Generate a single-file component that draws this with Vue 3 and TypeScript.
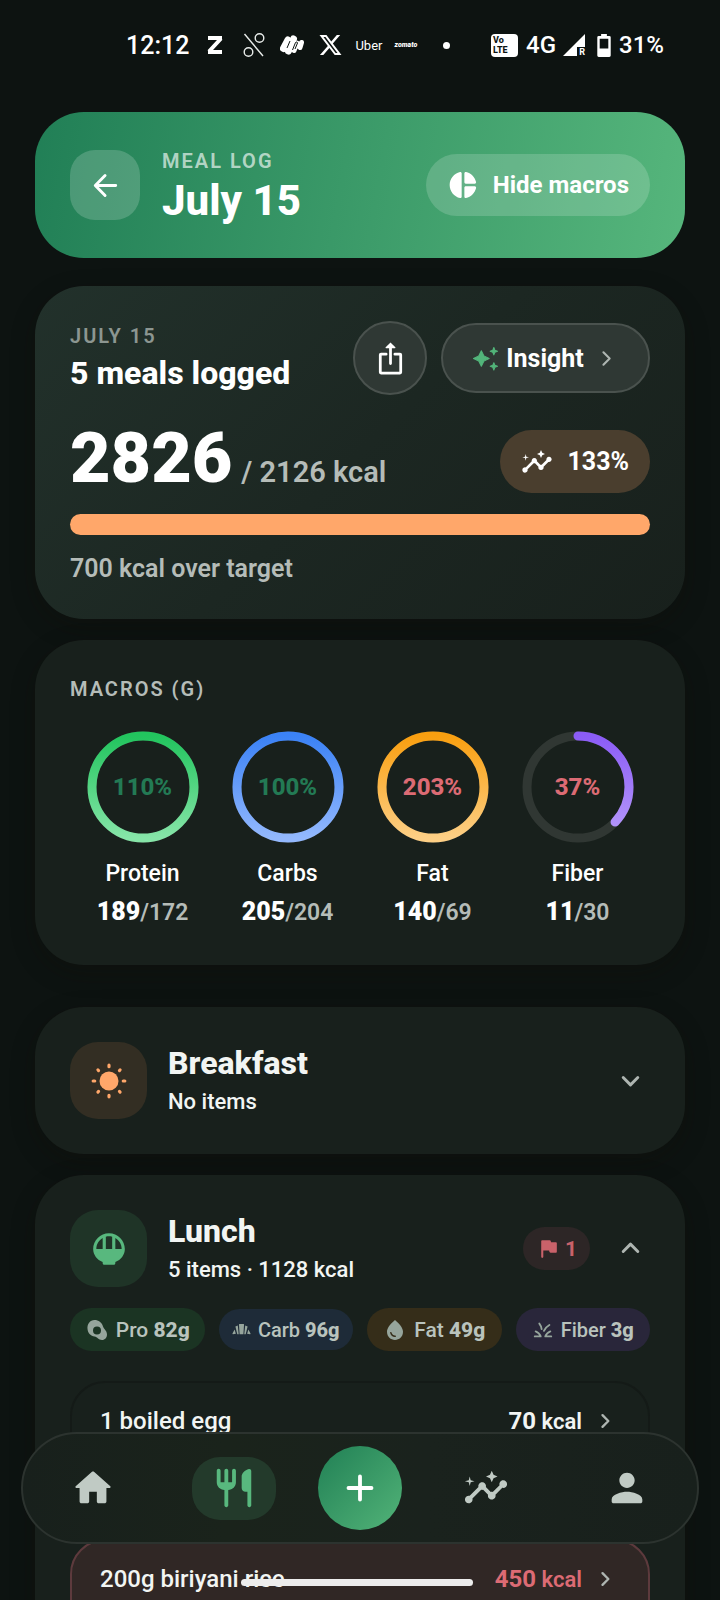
<script setup lang="ts">
interface Macro {
  name: string
  percent: number
  value: number
  goal: number
  from: string
  to: string
  tone: 'ok' | 'off'
}

interface Chip {
  key: string
  label: string
  grams: string
}

interface FoodItem {
  name: string
  kcal: number
  flagged: boolean
}

const radius = 51
const circumference = 2 * Math.PI * radius

const macros: Macro[] = [
  { name: 'Protein', percent: 110, value: 189, goal: 172, from: '#22c55e', to: '#86e5a8', tone: 'ok' },
  { name: 'Carbs', percent: 100, value: 205, goal: 204, from: '#3b82f6', to: '#93b8fd', tone: 'ok' },
  { name: 'Fat', percent: 203, value: 140, goal: 69, from: '#f99f10', to: '#fdcf85', tone: 'off' },
  { name: 'Fiber', percent: 37, value: 11, goal: 30, from: '#8b5cf6', to: '#b79bfb', tone: 'off' },
]

const chips: Chip[] = [
  { key: 'pro', label: 'Pro', grams: '82g' },
  { key: 'carb', label: 'Carb', grams: '96g' },
  { key: 'fat', label: 'Fat', grams: '49g' },
  { key: 'fiber', label: 'Fiber', grams: '3g' },
]

const items: FoodItem[] = [
  { name: '1 boiled egg', kcal: 70, flagged: false },
  { name: '200g biriyani rice', kcal: 450, flagged: true },
]

const insightsPath =
  'M21 8c-1.45 0-2.26 1.44-1.93 2.51l-3.55 3.56c-.3-.09-.74-.09-1.04 0l-2.55-2.55C12.27 10.45 11.46 9 10 9c-1.45 0-2.27 1.44-1.93 2.52l-4.56 4.55C2.44 15.74 1 16.55 1 18c0 1.1.9 2 2 2 1.45 0 2.26-1.44 1.93-2.51l4.55-4.56c.3.09.74.09 1.04 0l2.55 2.55C12.73 16.55 13.54 18 15 18c1.45 0 2.27-1.44 1.93-2.52l3.56-3.55C21.56 12.26 23 11.45 23 10c0-1.1-.9-2-2-2zM15 9l.94-2.07L18 6l-2.06-.93L15 3l-.92 2.07L12 6l2.08.93zM3.5 11L4 9l2-.5L4 8l-.5-2L3 8l-2 .5L3 9z'

function dash(percent: number): string {
  const length = (Math.min(percent, 100) / 100) * circumference
  return `${length} ${circumference}`
}
</script>

<template>
  <div class="screen">
    <div class="status">
      <div class="status-left">
        <span class="clock">12:12</span>
        <svg class="s-z" viewBox="0 0 16 18"><path d="M1 2h14M14 2.5 2 15.5M1 16h14" fill="none" stroke="#fff" stroke-width="4" /></svg>
        <svg class="s-pct" viewBox="0 0 22 24" fill="none" stroke="#e8ecea" stroke-width="1.4">
          <path d="M1.500 1 20 23" /><circle cx="16.500" cy="5" r="4.300" /><circle cx="5.500" cy="19" r="4.300" />
        </svg>
        <svg class="s-news" viewBox="0 0 24 20">
          <g stroke="#fff" stroke-linecap="round" fill="none">
            <path d="M3.500 13.500 8 5" stroke-width="7" />
            <path d="M8.500 16 13.500 4" stroke-width="7" />
            <path d="M14 15.500 17 8M20 12.500 21.500 7.500" stroke-width="5" />
          </g>
          <path d="M7 13l3-7M12.500 15l3-7.500q1.500-1.500 2 .5l-2.500 6" fill="none" stroke="#0d1311" stroke-width="1" />
        </svg>
        <svg class="s-x" viewBox="0 0 24 24">
          <path d="M18.900 1.150h3.680l-8.040 9.190L24 22.850h-7.410l-5.800-7.590-6.640 7.590H.47l8.600-9.830L0 1.150h7.590l5.240 6.930zM17.610 20.640h2.040L6.490 3.240H4.300z" fill="#fff" fill-rule="evenodd" />
        </svg>
        <span class="uber">Uber</span>
        <span class="zomato">zomato</span>
        <span class="dot"></span>
      </div>
      <div class="status-right">
        <span class="volte"><span>Vo</span><span>LTE</span></span>
        <span class="net">4G</span>
        <span class="signal">
          <svg viewBox="0 0 22 22"><path d="M22 0v13h-8v9H0z" fill="#fff" /></svg>
          <span class="roam">R</span>
        </span>
        <svg class="battery" viewBox="0 0 14 24">
          <path d="M4 0h6v2h2.500q1.500 0 1.500 1.500v19q0 1.500-1.500 1.500h-11Q0 24 0 22.500v-19Q0 2 1.500 2H4zM2.500 5v10h9V5z" fill="#fff" fill-rule="evenodd" />
        </svg>
        <span class="net">31%</span>
      </div>
    </div>

    <main class="content">
      <header class="hero">
        <button class="back" aria-label="Back">
          <svg class="i35" viewBox="0 0 24 24" fill="none" stroke="#fff" stroke-width="2" stroke-linecap="round" stroke-linejoin="round"><path d="M19 12H5.500M11.700 5.200 5 12l6.700 6.800" /></svg>
        </button>
        <div class="hero-text">
          <span class="eyebrow">MEAL LOG</span>
          <h1>July 15</h1>
        </div>
        <button class="hide">
          <svg class="i32" viewBox="0 0 24 24" fill="#fff"><path d="M11 3.180v17.640c0 .64-.59 1.120-1.210.98C5.320 20.800 2 16.790 2 12s3.320-8.800 7.790-9.800c.62-.14 1.210.34 1.210.98zm2.030 0v6.810c0 .55.45 1 1 1h6.790c.64 0 1.120-.59.98-1.220-.85-3.760-3.800-6.720-7.550-7.570-.63-.14-1.220.34-1.220.98zm0 10.830v6.810c0 .64.59 1.120 1.220.98 3.760-.85 6.710-3.820 7.560-7.580.14-.62-.35-1.220-.98-1.220h-6.790c-.56.01-1.010.46-1.010 1.010z" /></svg>
          Hide macros
        </button>
      </header>

      <section class="card summary">
        <div class="row">
          <div class="grow">
            <p class="eyebrow">JULY 15</p>
            <h2>5 meals logged</h2>
          </div>
          <button class="share" aria-label="Share">
            <svg class="i35" viewBox="0 0 24 24"><path d="M9 9H5.500Q5 9 5 9.500v12q0 .5.5.5h13q.5 0 .5-.5v-12q0-.5-.5-.5H15M12 4v11.500" fill="none" stroke="#fff" stroke-width="1.900" stroke-linecap="round" stroke-linejoin="round" /><path d="M12 1 8.700 4.200q-.5.800.4.800h5.800q.9 0 .4-.8z" fill="#fff" /></svg>
          </button>
          <button class="insight">
            <svg class="i25" viewBox="0 0 24 24" fill="#52b57a"><path d="M20 1.500l1 2.500 2.500 1-2.500 1-1 2.500-1-2.500-2.500-1 2.500-1zM8 4.500l2.500 5 5 2.500-5 2.500-2.500 5-2.500-5-5-2.500 5-2.500zM20 16l1 2.500 2.500 1-2.500 1-1 2.500-1-2.500-2.500-1 2.500-1z" stroke="#52b57a" stroke-width="1" stroke-linejoin="round" /></svg>
            <span>Insight</span>
            <svg class="i25 chev" viewBox="0 0 24 24"><path d="m10 6 6 6-6 6" /></svg>
          </button>
        </div>
        <div class="row total">
          <p class="grow"><strong>2826</strong><span>/ 2126 kcal</span></p>
          <div class="ratio">
            <svg class="i32" viewBox="0 0 24 24" fill="#fff"><path :d="insightsPath" /></svg>
            133%
          </div>
        </div>
        <div class="bar" role="progressbar" aria-label="Calories" aria-valuenow="100" aria-valuemin="0" aria-valuemax="100"></div>
        <p class="over">700 kcal over target</p>
      </section>

      <section class="card macros">
        <p class="eyebrow light">MACROS (G)</p>
        <div class="rings">
          <div v-for="m in macros" :key="m.name" class="macro">
            <div class="ring">
              <svg viewBox="0 0 112 112">
                <defs>
                  <linearGradient :id="'ring-' + m.name" x1="1" y1="0" x2="0" y2="0">
                    <stop offset="0" :stop-color="m.from" /><stop offset="1" :stop-color="m.to" />
                  </linearGradient>
                </defs>
                <g transform="rotate(-90 56 56)" fill="none" stroke-width="9" stroke-linecap="round">
                  <circle cx="56" cy="56" :r="radius" stroke="#303733" />
                  <circle cx="56" cy="56" :r="radius" :stroke="`url(#ring-${m.name})`" :stroke-dasharray="dash(m.percent)" />
                </g>
              </svg>
              <span :class="['pct', m.tone]">{{ m.percent }}%</span>
            </div>
            <span class="m-name">{{ m.name }}</span>
            <span class="m-val"><b>{{ m.value }}</b>/{{ m.goal }}</span>
          </div>
        </div>
      </section>

      <section class="card meal first">
        <div class="row">
          <span class="tile sun">
            <svg class="i38" viewBox="0 0 24 24"><circle cx="12" cy="12" r="6" fill="#ffa76a" /><path d="M12 2v1M12 21v1M2 12h1M21 12h1M5 5l.4.400M18.600 18.600l.4.400M19 5l-.4.400M5.400 18.600 5 19" fill="none" stroke="#ffa76a" stroke-width="2" stroke-linecap="round" /></svg>
          </span>
          <div class="grow">
            <h2>Breakfast</h2>
            <p class="sub">No items</p>
          </div>
          <button class="toggle" aria-label="Expand Breakfast">
            <svg class="i35 chev" viewBox="0 0 24 24"><path d="m7 10 5 5 5-5" /></svg>
          </button>
        </div>
      </section>

      <section class="card meal">
        <div class="row">
          <span class="tile bowl">
            <svg class="i38" viewBox="0 0 24 24" fill="#58b87e"><path d="M22 12c0-5.520-4.480-10-10-10S2 6.480 2 12c0 3.690 2.470 6.860 6 8.250V21q0 1 1 1h6q1 0 1-1v-.75c3.530-1.390 6-4.560 6-8.250zM20 12h-4V5.080c2.390 1.390 4 3.970 4 6.920zM14 4.260V12h-4V4.260C10.640 4.100 11.310 4 12 4s1.360.1 2 .26zM4 12c0-2.950 1.610-5.530 4-6.920V12z" fill-rule="evenodd" /></svg>
          </span>
          <div class="grow">
            <h2>Lunch</h2>
            <p class="sub">5 items · 1128 kcal</p>
          </div>
          <span class="flag">
            <svg class="i25" viewBox="0 0 24 24" fill="#c9626a"><path d="M14.400 6l-.24-1.200c-.09-.46-.5-.8-.98-.8H6c-.55 0-1 .45-1 1v15c0 .55.45 1 1 1s1-.45 1-1v-6h5.600l.24 1.200c.09.47.5.8.98.8H19c.55 0 1-.45 1-1V7c0-.55-.45-1-1-1h-4.600z" /></svg>
            1
          </span>
          <button class="toggle" aria-label="Collapse Lunch">
            <svg class="i35 chev" viewBox="0 0 24 24"><path d="m7 14 5-5 5 5" /></svg>
          </button>
        </div>

        <div class="chips">
          <span v-for="c in chips" :key="c.key" :class="['chip', c.key]">
            <svg viewBox="0 0 24 24" fill="currentColor">
              <path v-if="c.key === 'pro'" fill-rule="evenodd" d="M9.500 2C5 2 2 6 2.500 11c.4 4.500 3.500 7 7 7.500 3 .5 4 3.500 7.500 3.500 3 0 5-2.500 5-5.500 0-4-3-5-4-8C17 4.500 13.500 2 9.500 2zM12 8.400a4 4 0 1 0 0 8 4 4 0 0 0 0-8z" />
              <g v-else-if="c.key === 'carb'">
                <path d="M9.300 5h5.400q.6 0 .5.600l-.8 12.400H9.600L8.800 5.600q-.1-.6.500-.6zM4.300 8.200 7.300 7l1.200 11H6.700zM19.700 8.200 16.700 7l-1.200 11h1.800zM3.300 12 .6 16.900q-.2 1 .6 1l3.700-.4zM20.700 12l2.700 4.900q.2 1-.6 1l-3.700-.4z" />
              </g>
              <path v-else-if="c.key === 'fat'" fill-rule="evenodd" d="M12 2c-5.330 4.550-8 8.480-8 11.800 0 4.980 3.800 8.200 8 8.200s8-3.220 8-8.200c0-3.320-2.670-7.250-8-11.800zM7.830 14c.37 0 .67.26.74.62.41 2.220 2.280 2.980 3.640 2.870.43-.02.79.32.79.75 0 .4-.32.73-.72.75-2.130.13-4.620-1.090-5.190-4.120-.08-.45.28-.87.74-.87z" />
              <path v-else d="M3 19h6.500q-1.500-4-5.500-5.500M21 19h-6.500q1.500-4 5.500-5.500M13 13q1.500-4 6-6.500M10.500 11Q10 7.500 8 5" fill="none" stroke="currentColor" stroke-width="2" stroke-linecap="round" stroke-linejoin="round" />
            </svg>
            <span>{{ c.label }} <b>{{ c.grams }}</b></span>
          </span>
        </div>

        <ul class="items">
          <li v-for="f in items" :key="f.name">
            <a href="#" :class="['item', { flagged: f.flagged }]">
              <span class="grow">{{ f.name }}</span>
              <span class="kcal"><b>{{ f.kcal }}</b> kcal</span>
              <svg class="i28 chev" viewBox="0 0 24 24"><path d="m9 7 5 5-5 5" /></svg>
            </a>
          </li>
        </ul>
      </section>
    </main>

    <nav class="dock">
      <a href="#" aria-label="Home"><svg class="i46" viewBox="0 0 24 24"><path d="M10 19v-5h4v5c0 .55.45 1 1 1h3c.55 0 1-.45 1-1v-7h1.700c.46 0 .68-.57.33-.87L12.670 3.600c-.38-.34-.96-.34-1.340 0l-8.360 7.530c-.34.3-.13.87.33.87H5v7c0 .55.45 1 1 1h3c.55 0 1-.45 1-1z" /></svg></a>
      <a href="#" aria-label="Meals" class="active"><svg class="i46" viewBox="0 0 24 24"><path d="M16 6v6c0 1.100.9 2 2 2h1v7c0 .55.45 1 1 1s1-.45 1-1V3.130c0-.65-.61-1.130-1.240-.98C17.600 2.680 16 4.510 16 6zm-5 3H9V3c0-.55-.45-1-1-1s-1 .45-1 1v6H5V3c0-.55-.45-1-1-1s-1 .45-1 1v6c0 2.210 1.790 4 4 4v8c0 .55.45 1 1 1s1-.45 1-1v-8c2.210 0 4-1.790 4-4V3c0-.55-.45-1-1-1s-1 .45-1 1v6z" /></svg></a>
      <button class="add" aria-label="Add"><svg class="i46" viewBox="0 0 24 24"><path d="M12 6v12M6 12h12" fill="none" stroke="#fff" stroke-width="2" stroke-linecap="round" /></svg></button>
      <a href="#" aria-label="Trends"><svg class="i46" viewBox="0 0 24 24"><path :d="insightsPath" /></svg></a>
      <a href="#" aria-label="Profile"><svg class="i46" viewBox="0 0 24 24"><path d="M12 12c2.210 0 4-1.790 4-4s-1.790-4-4-4-4 1.790-4 4 1.790 4 4 4zm0 2c-2.670 0-8 1.340-8 4v1c0 .55.45 1 1 1h14c.55 0 1-.45 1-1v-1c0-2.660-5.330-4-8-4z" /></svg></a>
    </nav>
    <div class="gesture"></div>
  </div>
</template>

<style>
body {
  margin: 0;
  background: #0d1311;
}
</style>

<style scoped>
.screen {
  position: relative;
  height: 100vh;
  overflow: hidden;
  background: #0d1311;
  color: #fff;
  font-family: Roboto, "Noto Sans", sans-serif;
}
h1, h2, p, ul { margin: 0; padding: 0; }
button { border: 0; padding: 0; font: inherit; color: inherit; cursor: pointer; }
a { color: inherit; text-decoration: none; }
svg { display: block; flex: none; }
.i25 { width: 25px; height: 25px; }
.i28 { width: 28px; height: 28px; }
.i32 { width: 32px; height: 32px; }
.i35 { width: 35px; height: 35px; }
.i38 { width: 38px; height: 38px; }
.i46 { width: 46px; height: 46px; }
.chev { fill: none; stroke: #aeb5b1; stroke-width: 2; stroke-linecap: round; stroke-linejoin: round; }
.row { display: flex; align-items: center; }
.grow { flex: 1; min-width: 0; }

.status {
  display: flex;
  justify-content: space-between;
  align-items: center;
  height: 90px;
  padding: 0 56px 0 126px;
  font-weight: 500;
  font-size: 24px;
}
.status-left, .status-right { display: flex; align-items: center; }
.clock { font-size: 25px; }
.s-z { width: 16px; height: 18px; margin-left: 18px; }
.s-pct { width: 22px; height: 24px; margin-left: 20px; }
.s-news { width: 24px; height: 20px; margin-left: 15px; }
.s-x { width: 23px; height: 22px; margin-left: 15px; }
.uber { margin-left: 13px; font-size: 13px; font-weight: 400; }
.zomato { margin-left: 12px; font-size: 7px; font-weight: 900; font-style: italic; }
.dot { width: 7px; height: 7px; margin-left: 26px; border-radius: 50%; background: #fff; }
.volte {
  display: flex;
  flex-direction: column;
  justify-content: center;
  width: 25px;
  height: 23px;
  padding-left: 2px;
  border-radius: 4px;
  background: #fff;
  color: #0d1311;
  font-size: 9px;
  font-weight: 800;
  line-height: 10px;
}
.net { margin-left: 8px; }
.signal { position: relative; margin-left: 7px; }
.signal svg { width: 22px; height: 22px; }
.roam { position: absolute; right: 0; bottom: 0; font-size: 9px; line-height: 8px; font-weight: 700; }
.battery { width: 14px; height: 23px; margin-left: 12px; }

.content { padding: 22px 35px 0; }

.hero {
  display: flex;
  align-items: center;
  padding: 33px 35px;
  border-radius: 49px;
  background: linear-gradient(100deg, #217f56, #56b67c);
}
.back {
  display: grid;
  place-items: center;
  width: 70px;
  height: 70px;
  border-radius: 25px;
  background: rgba(255, 255, 255, 0.18);
}
.hero-text { flex: 1; margin-left: 22px; }
.hero-text .eyebrow { line-height: 32px; color: rgba(255, 255, 255, 0.65); }
.eyebrow {
  display: block;
  font-size: 20px;
  font-weight: 600;
  letter-spacing: 2px;
  color: #8c9691;
}
h1 { font-size: 42px; line-height: 48px; font-weight: 800; }
.hide {
  display: flex;
  align-items: center;
  gap: 14px;
  height: 62px;
  padding: 0 21px;
  border-radius: 31px;
  background: rgba(255, 255, 255, 0.17);
  font-size: 24px;
  font-weight: 700;
}

.card {
  margin-top: 21px;
  padding: 35px;
  border-radius: 49px;
  background: #18201c;
  box-shadow: 0 8px 24px rgba(16, 12, 6, 0.3);
}
h2 { font-size: 32px; line-height: 38px; font-weight: 800; }

.summary { margin-top: 28px; background: linear-gradient(135deg, #22312b, #1c2722 50%, #18201c); }
.summary .eyebrow { line-height: 29px; }
.summary h2 { line-height: 44px; }
.share {
  display: grid;
  place-items: center;
  width: 74px;
  height: 74px;
  border: 2px solid #4a524e;
  border-radius: 50%;
  background: #2f3834;
}
.insight {
  display: flex;
  align-items: center;
  justify-content: center;
  width: 209px;
  height: 70px;
  margin-left: 14px;
  border: 2px solid #4a524e;
  border-radius: 35px;
  background: #2f3834;
  font-size: 25px;
  font-weight: 700;
}
.insight span { margin: 0 9px 0 8px; }
.total { align-items: flex-end; margin-top: 28px; }
.total p { display: flex; align-items: baseline; gap: 9px; }
.total strong { font-size: 70px; line-height: 70px; font-weight: 900; }
.total p span { font-size: 29px; line-height: 30px; font-weight: 600; color: #b5bcb8; }
.ratio {
  display: flex;
  align-items: center;
  gap: 14px;
  height: 63px;
  padding: 0 21px;
  border-radius: 32px;
  background: #4a3e2e;
  font-size: 25px;
  font-weight: 700;
}
.bar { height: 21px; margin-top: 21px; border-radius: 11px; background: #ffa76a; }
.over { margin-top: 18px; font-size: 25px; line-height: 31px; font-weight: 600; color: #b5bcb8; }

.macros { padding-bottom: 38px; }
.macros .eyebrow { line-height: 29px; }
.macros .light { color: #b5bcb8; }
.rings { display: grid; grid-template-columns: repeat(4, 1fr); margin-top: 27px; }
.macro { display: flex; flex-direction: column; align-items: center; }
.ring { display: grid; place-items: center; }
.ring > * { grid-area: 1 / 1; }
.ring svg { width: 112px; height: 112px; }
.pct { font-size: 24px; font-weight: 800; }
.pct.ok { color: #237a54; }
.pct.off { color: #dc6b74; }
.m-name { margin-top: 17px; font-size: 23px; line-height: 28px; font-weight: 500; }
.m-val { margin-top: 10px; font-size: 23px; line-height: 28px; font-weight: 600; color: #b5bcb8; }
.m-val b { color: #fff; font-size: 25px; }

.meal.first { margin-top: 42px; }
.tile { display: grid; place-items: center; width: 77px; height: 77px; margin-right: 21px; border-radius: 28px; }
.sun { background: #332e23; }
.bowl { background: #1f3427; }
.meal h2, .sub { color: #f2f5f3; }
.sub { margin-top: 4px; font-size: 22px; line-height: 31px; font-weight: 500; }
.toggle { padding: 0 2px; background: none; }
.flag {
  display: flex;
  align-items: center;
  gap: 4px;
  height: 43px;
  padding: 0 13px;
  margin-right: 21px;
  border-radius: 22px;
  background: #2d2626;
  font-size: 21px;
  font-weight: 700;
  color: #c9626a;
}
.chips { display: grid; grid-template-columns: repeat(4, 1fr); align-items: center; gap: 14px; margin-top: 21px; }
.chip {
  display: flex;
  align-items: center;
  justify-content: center;
  gap: 7px;
  height: 43px;
  border-radius: 22px;
  font-size: 21px;
  font-weight: 500;
  color: #b9c3bd;
  white-space: nowrap;
}
.chip svg { width: 24px; height: 24px; color: #96a59c; }
.chip b { font-weight: 800; }
.pro { background: #1b3423; }
.carb { height: 41px; background: #1e2b38; font-size: 20px; }
.carb svg { width: 19px; height: 19px; }
.fat { background: #352d19; }
.fiber { background: #29263a; font-size: 20px; }
.fiber svg { width: 22px; height: 22px; }

.items { display: grid; gap: 14px; margin-top: 30px; list-style: none; }
.item {
  display: flex;
  align-items: flex-start;
  box-sizing: border-box;
  min-height: 144px;
  padding: 24px 28px;
  border: 2px solid #141a17;
  border-radius: 35px;
  font-size: 24px;
  line-height: 28px;
  font-weight: 500;
  color: #f2f5f3;
}
.kcal { margin-right: 10px; font-size: 22px; font-weight: 600; }
.kcal b { font-size: 24px; font-weight: 700; }
.item.flagged { border-color: #5d3a3d; background: #302725; }
.flagged .kcal { color: #dc6b74; }

.dock {
  position: absolute;
  left: 21px;
  right: 21px;
  bottom: 56px;
  box-sizing: border-box;
  display: grid;
  grid-template-columns: 1fr 1fr 112px 1fr 1fr;
  place-items: center;
  height: 112px;
  border: 2px solid #2c332f;
  border-radius: 56px;
  background: linear-gradient(90deg, #18201c, #1a231b 30%, #1a221d 60%, #18201c);
}
.dock a { display: grid; place-items: center; width: 84px; height: 63px; border-radius: 28px; }
.dock a svg { fill: #c0cac4; }
.dock .active { background: #233a2b; }
.dock .active svg { fill: #58b87e; }
.add {
  display: grid;
  place-items: center;
  width: 84px;
  height: 84px;
  border-radius: 50%;
  background: linear-gradient(135deg, #218055, #52b378);
}
.gesture {
  position: absolute;
  bottom: 14px;
  left: 50%;
  width: 232px;
  height: 7px;
  margin-left: -119px;
  border-radius: 4px;
  background: #ececec;
}
</style>
